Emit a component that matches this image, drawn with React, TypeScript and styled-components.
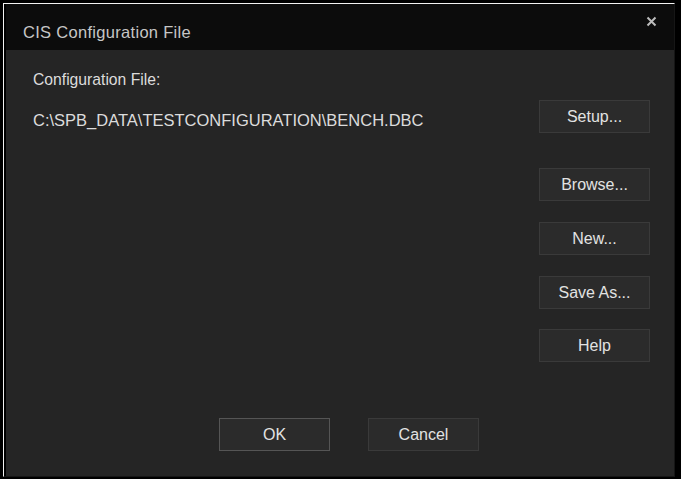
import React from 'react';
import styled, { createGlobalStyle } from 'styled-components';

const GlobalStyle = createGlobalStyle`
    html, body {
        margin: 0;
        padding: 0;
        background: #000;
        width: 681px;
        height: 479px;
        overflow: hidden;
    }
    body {
        font-family: "Liberation Sans", Arial, sans-serif;
    }
`;

const sideButtons = [
    { label: 'Setup...', gap: 0 },
    { label: 'Browse...', gap: 35 },
    { label: 'New...', gap: 21 },
    { label: 'Save As...', gap: 21 },
    { label: 'Help', gap: 20 },
];

const App = () => {
    return (
        <>
            <GlobalStyle />
            <Window>
                <Frame>
                    <TitleBar>
                        <Title>CIS Configuration File</Title>
                        <CloseBtn>
                            <svg width="11" height="11" viewBox="0 0 11 11">
                                <path d="M1.5 1.5 L9.5 9.5 M9.5 1.5 L1.5 9.5" stroke="#bdbdbd" strokeWidth="2" />
                            </svg>
                        </CloseBtn>
                    </TitleBar>
                    <Body>
                        <Main>
                            <InfoColumn>
                                <Label>Configuration File:</Label>
                                <Path>C:\SPB_DATA\TESTCONFIGURATION\BENCH.DBC</Path>
                            </InfoColumn>
                            <ButtonColumn>
                                {sideButtons.map(b => (
                                    <Button key={b.label} gap={b.gap}>{b.label}</Button>
                                ))}
                            </ButtonColumn>
                        </Main>
                        <Footer>
                            <Button isDefault>OK</Button>
                            <Button>Cancel</Button>
                        </Footer>
                    </Body>
                </Frame>
            </Window>
        </>
    );
}


// styled-components
const Window = styled.div`
    margin: 3px 0 0 3px;
    width: 670px;
    height: 472px;
    border-top: 1px solid #f2f2f2;
    border-left: 1px solid #f2f2f2;
    border-right: 1px solid #161616;
    border-bottom: 1px solid #161616;
    background: #000;
    display: flex;
`;

const Frame = styled.div`
    flex: 1;
    margin-left: 2px;
    display: flex;
    flex-direction: column;
    background: #252525;
`;

const TitleBar = styled.div`
    height: 46px;
    background: #0c0c0c;
    display: flex;
    align-items: center;
    justify-content: space-between;
    padding: 0 0 0 17px;
`;

const Title = styled.div`
    color: #c6c6c6;
    font-size: 16.5px;
    margin-top: 10px;
    letter-spacing: 0.3px;
`;

const CloseBtn = styled.div`
    width: 30px;
    height: 30px;
    display: flex;
    align-items: center;
    justify-content: center;
    align-self: flex-start;
    margin: 2px 8px 0 0;
`;

const Body = styled.div`
    flex: 1;
    display: flex;
    flex-direction: column;
    padding: 0 24px 25px 27px;
`;

const Main = styled.div`
    flex: 1;
    display: flex;
    justify-content: space-between;
`;

const InfoColumn = styled.div`
    display: flex;
    flex-direction: column;
    padding-top: 21px;
`;

const Label = styled.div`
    color: #dcdcdc;
    font-size: 15.7px;
    line-height: 18px;
`;

const Path = styled.div`
    color: #dcdcdc;
    font-size: 16.5px;
    line-height: 18px;
    margin-top: 22px;
`;

const ButtonColumn = styled.div`
    display: flex;
    flex-direction: column;
    padding-top: 50px;
`;

const Button = styled.div<{ gap?: number; isDefault?: boolean }>`
    width: 111px;
    height: 33px;
    box-sizing: border-box;
    margin-top: ${p => p.gap || 0}px;
    background: #2b2b2b;
    border: 1px solid ${p => p.isDefault ? '#555555' : '#3a3a3a'};
    color: #e2e2e2;
    font-size: 16px;
    display: flex;
    align-items: center;
    justify-content: center;
`;

const Footer = styled.div`
    display: flex;
    justify-content: center;
    gap: 38px;
    padding-left: 15px;
`;

export default App;
